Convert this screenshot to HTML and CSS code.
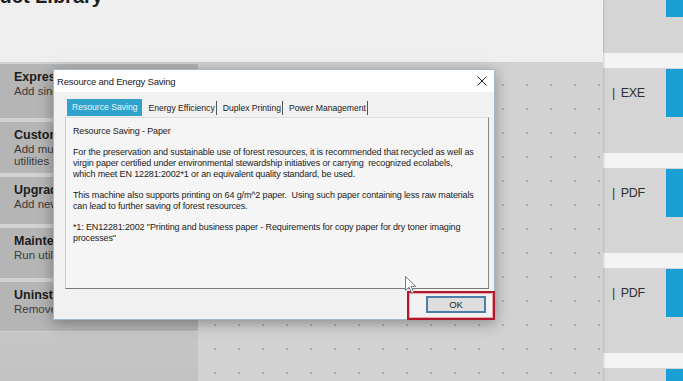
FILE: index.html
```html
<!DOCTYPE html>
<html lang="en">
<head>
    <meta charset="UTF-8">
    <meta name="viewport" content="width=device-width, initial-scale=1.0">
    <title>Product Library</title>
    <link rel="stylesheet" href="styles.css">
</head>
<body>
    <div class="screen">
        <div class="main">
            <div class="top">
                <h1 class="page-title">Product Library</h1>
            </div>
            <div class="workspace">
                <ul class="task-list">
                    <li class="task task-express"><b>Express Installation</b><span>Add single printer</span></li>
                    <li class="task task-custom"><b>Custom Installation</b><span>Add multiple printers and<br>utilities</span></li>
                    <li class="task task-upgrade"><b>Upgrade Driver</b><span>Add new driver</span></li>
                    <li class="task task-maint"><b>Maintenance</b><span>Run utilities</span></li>
                    <li class="task task-uninst"><b>Uninstall</b><span>Remove software</span></li>
                </ul>
                <div class="canvas"></div>
            </div>
        </div>

        <!-- download column on the right -->
        <div class="side">
            <div class="side-row"><span class="file-type"></span><span class="side-btn"></span></div>
            <div class="side-row"><span class="file-type"><span class="bar">|</span>EXE</span><span class="side-btn"></span></div>
            <div class="side-row"><span class="file-type"><span class="bar">|</span>PDF</span><span class="side-btn"></span></div>
            <div class="side-row"><span class="file-type"><span class="bar">|</span>PDF</span><span class="side-btn"></span></div>
            <div class="side-row"><span class="file-type"></span><span class="side-btn"></span></div>
        </div>

        <!-- Modal dialog -->
        <div class="dialog">
            <div class="dialog-titlebar">
                <span class="dialog-title">Resource and Energy Saving</span>
                <svg class="dialog-close" width="10" height="10" viewBox="0 0 10 10">
                    <path d="M0.5 0.5 L9.5 9.5 M9.5 0.5 L0.5 9.5" stroke="#222" stroke-width="1"/>
                </svg>
            </div>
            <div class="tabs">
                <span class="tab active">Resource Saving</span>
                <span class="tab">Energy Efficiency</span>
                <span class="tab">Duplex Printing</span>
                <span class="tab">Power Management</span>
            </div>
            <div class="tab-panel">
                <p>Resource Saving - Paper</p>
                <p>For the preservation and sustainable use of forest resources, it is recommended that recycled as well as<br>
                virgin paper certified under environmental stewardship initiatives or carrying&nbsp; recognized ecolabels,<br>
                which meet EN 12281:2002*1 or an equivalent quality standard, be used.</p>
                <p>This machine also supports printing on 64 g/m^2 paper.&nbsp; Using such paper containing less raw materials<br>
                can lead to further saving of forest resources.</p>
                <p>*1: EN12281:2002 "Printing and business paper - Requirements for copy paper for dry toner imaging<br>
                processes"</p>
            </div>
            <div class="dialog-footer">
                <button type="button" class="ok-button">OK</button>
            </div>
            <div class="highlight"></div>
        </div>

        <svg class="cursor" width="12" height="18" viewBox="0 0 12 18">
            <path d="M0.5 0.5 L0.5 14.5 L4 11.2 L6.6 17 L8.6 16.1 L6.1 10.4 L10.8 10.4 Z" fill="#fafafa" stroke="#7a7a7a" stroke-width="1"/>
        </svg>
    </div>
</body>
</html>
```

FILE: styles.css
```css
/* Page */
body {
    margin: 0;
    font-family: 'Liberation Sans', Arial, sans-serif;
    background-color: #d3d3d3;
}

.screen {
    position: relative;
    width: 683px;
    height: 381px;
    overflow: hidden;
    display: grid;
    grid-template-columns: 603px 80px;
}

/* Main area */
.main {
    display: flex;
    flex-direction: column;
    box-shadow: 1px 0 2px rgba(0, 0, 0, 0.15);
    z-index: 1;
}

.top {
    height: 62px;
    background-color: #efefef;
    overflow: hidden;
}

.page-title {
    margin: -14px 0 0 -46px;
    font-size: 20px;
    line-height: 20px;
    font-weight: bold;
    color: #1e1e1e;
    white-space: nowrap;
}

.workspace {
    flex: 1;
    display: grid;
    grid-template-columns: 198px 1fr;
}

/* Task list on the left */
.task-list {
    list-style: none;
    margin: 0;
    padding: 2px 0 0;
    display: flex;
    flex-direction: column;
    gap: 4px;
    background: linear-gradient(#d2d2d2 0, #d2d2d2 270px, #c6c6c6 270px, #bcbcbc 100%);
}

.task {
    background-color: #b5b5b5;
    padding: 6px 0 0 14px;
    display: flex;
    flex-direction: column;
    color: #1c1c1c;
    white-space: nowrap;
}

.task b {
    font-size: 12.5px;
    line-height: 15px;
}

.task span {
    font-size: 11.5px;
    line-height: 12px;
    color: #3a3a3a;
}

.task-express { height: 48px; }
.task-custom { height: 45px; }
.task-upgrade { height: 41px; }
.task-maint { height: 44px; }
.task-uninst { height: 43px; }

.canvas {
    background-color: #d2d2d2;
    background-image: radial-gradient(circle, #ababab 0.8px, transparent 1.2px);
    background-size: 24px 24px;
    background-position: 5px 11px;
}

/* Right column */
.side {
    background-color: #f4f4f4;
    margin-top: -32px;
    display: flex;
    flex-direction: column;
    gap: 15px;
}

.side-row {
    flex: none;
    height: 85px;
    background-color: #d5d5d5;
    display: flex;
    justify-content: space-between;
    align-items: flex-start;
}

.file-type {
    margin: 1px 0 0 9px;
    line-height: 48px;
    font-size: 12.5px;
    letter-spacing: -0.4px;
    color: #2f2f2f;
}

.file-type .bar {
    margin-right: 6px;
}

.side-btn {
    margin-top: 1px;
    width: 17px;
    height: 48px;
    background-color: #199fd4;
}

/* Dialog */
.dialog {
    position: absolute;
    left: 53px;
    top: 69px;
    width: 440px;
    height: 249px;
    background-color: #f1f1f1;
    border: 1px solid #a3b8cc;
    box-shadow: 0 3px 14px rgba(0, 0, 0, 0.35);
    z-index: 2;
    display: flex;
    flex-direction: column;
}

.dialog-titlebar {
    height: 22px;
    background-color: #ffffff;
    display: flex;
    align-items: center;
    justify-content: space-between;
    padding: 0 7px 0 3px;
}

.dialog-title {
    font-size: 9.5px;
    letter-spacing: -0.2px;
    color: #1a1a1a;
}

.tabs {
    margin: 7px 0 0 13px;
    height: 17px;
    display: flex;
    align-items: center;
    font-size: 8.6px;
    color: #1a1a1a;
    white-space: nowrap;
}

.tab {
    padding: 0 1px 0 6px;
    border-right: 1px solid #555;
    line-height: 14px;
}

.tab.active {
    background-color: #30a3cd;
    color: #e6f6fc;
    border-right: none;
    padding: 0 5px;
    line-height: 17px;
}

.tab-panel {
    margin: 1px 5px 0 11px;
    height: 162px;
    padding: 8px 8px 0 7px;
    background-color: #f5f5f5;
    border: 1px solid;
    border-color: #dedede #858585 #7b7b7b #cdcdcd;
    font-size: 9px;
    letter-spacing: -0.13px;
    line-height: 11px;
    color: #222;
    white-space: nowrap;
}

.tab-panel p {
    margin: 0 0 10px;
}

.dialog-footer {
    flex: 1;
    display: flex;
    justify-content: flex-end;
    align-items: flex-start;
    padding: 7px 8px 0 0;
}

.ok-button {
    width: 60px;
    height: 17px;
    padding: 0;
    font-family: inherit;
    font-size: 9.5px;
    color: #222;
    background-color: #dedede;
    border: 2px solid #4d7ea9;
}

/* Red annotation box around OK */
.highlight {
    position: absolute;
    right: -1px;
    bottom: -1px;
    width: 84px;
    height: 25px;
    border: 2px solid #b2172b;
    box-shadow: inset 0 0 0 1px #e9a8b0;
}

.cursor {
    position: absolute;
    left: 405px;
    top: 276px;
    z-index: 3;
}
```
